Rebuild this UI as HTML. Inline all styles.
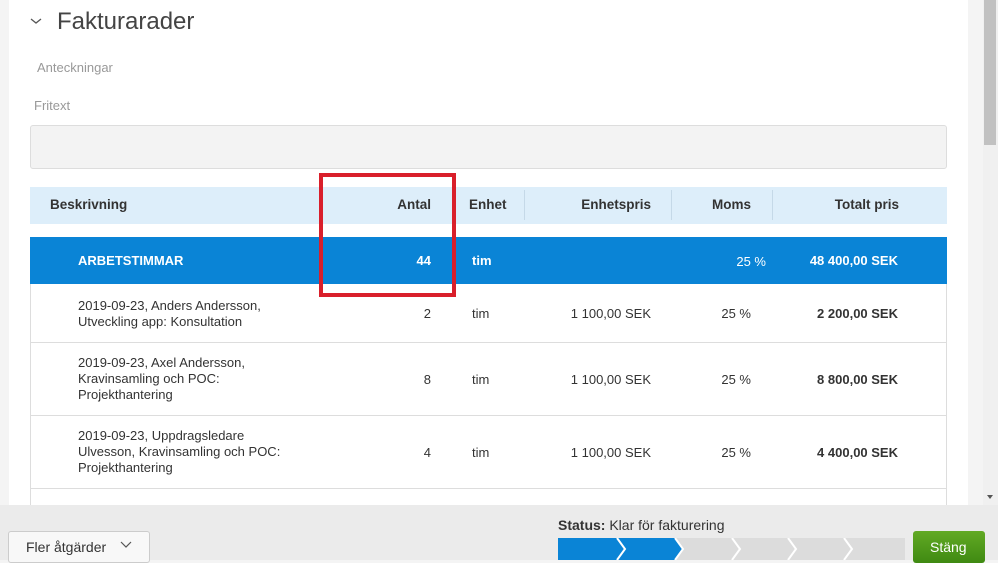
<!DOCTYPE html>
<html><head><meta charset="utf-8"><style>
*{margin:0;padding:0;box-sizing:border-box}
body{width:998px;height:560px;overflow:hidden;background:#f4f4f4;font-family:"Liberation Sans",sans-serif;color:#333;position:relative;font-size:13px}
.a{position:absolute;white-space:nowrap}
.r{text-align:right}
.hd{font-weight:bold;font-size:13.5px;color:#333}
.line{position:absolute;left:30px;width:917px;height:1px;background:#ddd}
.sep{position:absolute;top:190px;width:1px;height:30px;background:#c5d9e8}
</style></head><body>
<div class="a" style="left:9px;top:0;width:959px;height:505px;background:#fff"></div>
<div class="a" style="left:983px;top:0;width:15px;height:505px;background:#f0f0f0"></div>
<div class="a" style="left:984px;top:0;width:12px;height:145px;background:#c1c1c1"></div>
<div class="a" style="left:987px;top:495px;width:0;height:0;border-left:3px solid transparent;border-right:3px solid transparent;border-top:4px solid #555"></div>

<svg class="a" style="left:30px;top:16px" width="12" height="10"><path d="M1 3 L6 7 L11 3" stroke="#555" stroke-width="1.3" fill="none"/></svg>
<div class="a" style="left:57px;top:8px;font-size:24px;color:#444;font-weight:300">Fakturarader</div>
<div class="a" style="left:37px;top:60px;color:#999;font-size:13px">Anteckningar</div>
<div class="a" style="left:34px;top:98px;color:#999;font-size:13px">Fritext</div>
<div class="a" style="left:30px;top:125px;width:917px;height:44px;background:#f3f3f3;border:1px solid #ddd;border-radius:3px"></div>

<div class="a" style="left:30px;top:187px;width:917px;height:37px;background:#ddeefa"></div>
<div class="sep" style="left:524px"></div><div class="sep" style="left:671px"></div><div class="sep" style="left:772px"></div>
<div class="a hd" style="left:50px;top:197px">Beskrivning</div>
<div class="a hd r" style="right:567px;top:197px">Antal</div>
<div class="a hd" style="left:469px;top:197px">Enhet</div>
<div class="a hd r" style="right:347px;top:197px">Enhetspris</div>
<div class="a hd" style="left:712px;top:197px">Moms</div>
<div class="a hd r" style="right:99px;top:197px">Totalt pris</div>

<div class="a" style="left:30px;top:237px;width:917px;height:47px;background:#0a84d6"></div>
<div class="a" style="left:78px;top:253px;color:#fff;font-weight:bold">ARBETSTIMMAR</div>
<div class="a r" style="right:567px;top:253px;color:#fff;font-weight:bold">44</div>
<div class="a" style="left:472px;top:253px;color:#fff;font-weight:bold">tim</div>
<div class="a r" style="right:232px;top:254px;color:#fff">25 %</div>
<div class="a r" style="right:100px;top:253px;color:#fff;font-weight:bold">48 400,00 SEK</div>

<div class="a" style="left:30px;top:284px;width:917px;height:221px;border-left:1px solid #ddd;border-right:1px solid #ddd"></div>
<div class="line" style="top:342px"></div><div class="line" style="top:415px"></div><div class="line" style="top:488px"></div>

<div class="a" style="left:78px;top:298px;line-height:16px">2019-09-23, Anders Andersson,<br>Utveckling app: Konsultation</div>
<div class="a r" style="right:567px;top:306px">2</div><div class="a" style="left:472px;top:306px">tim</div>
<div class="a r" style="right:347px;top:306px">1 100,00 SEK</div><div class="a r" style="right:247px;top:306px">25 %</div>
<div class="a r" style="right:100px;top:306px;font-weight:bold">2 200,00 SEK</div>

<div class="a" style="left:78px;top:355px;line-height:16px">2019-09-23, Axel Andersson,<br>Kravinsamling och POC:<br>Projekthantering</div>
<div class="a r" style="right:567px;top:372px">8</div><div class="a" style="left:472px;top:372px">tim</div>
<div class="a r" style="right:347px;top:372px">1 100,00 SEK</div><div class="a r" style="right:247px;top:372px">25 %</div>
<div class="a r" style="right:100px;top:372px;font-weight:bold">8 800,00 SEK</div>

<div class="a" style="left:78px;top:428px;line-height:16px">2019-09-23, Uppdragsledare<br>Ulvesson, Kravinsamling och POC:<br>Projekthantering</div>
<div class="a r" style="right:567px;top:445px">4</div><div class="a" style="left:472px;top:445px">tim</div>
<div class="a r" style="right:347px;top:445px">1 100,00 SEK</div><div class="a r" style="right:247px;top:445px">25 %</div>
<div class="a r" style="right:100px;top:445px;font-weight:bold">4 400,00 SEK</div>

<div class="a" style="left:319px;top:173px;width:137px;height:124px;border:4px solid #d91f2b"></div>

<div class="a" style="left:0;top:505px;width:998px;height:55px;background:#ebebeb"></div>
<div class="a" style="left:8px;top:531px;width:142px;height:32px;background:#f8f8f8;border:1px solid #ccc;border-radius:3px"></div>
<div class="a" style="left:26px;top:539px;font-size:14px;color:#333">Fler åtgärder</div>
<svg class="a" style="left:120px;top:541px" width="12" height="8"><path d="M1 1 L6 6 L11 1" stroke="#555" stroke-width="1.2" fill="none"/></svg>
<div class="a" style="left:558px;top:517px;font-size:14px;color:#333"><b>Status:</b> Klar för fakturering</div>
<svg class="a" style="left:558px;top:538px" width="347" height="22">
<rect width="347" height="22" fill="#dcdcdc"/>
<path d="M0 0 H117 L125 11 L117 22 H0Z" fill="#0a84d6"/>
<path d="M59 0 L67 11 L59 22" stroke="#fff" stroke-width="2" fill="none"/>
<path d="M117 0 L125 11 L117 22" stroke="#fff" stroke-width="2" fill="none"/>
<path d="M174 0 L182 11 L174 22" stroke="#fff" stroke-width="2" fill="none"/>
<path d="M230 0 L238 11 L230 22" stroke="#fff" stroke-width="2" fill="none"/>
<path d="M286 0 L294 11 L286 22" stroke="#fff" stroke-width="2" fill="none"/>
</svg>
<div class="a" style="left:913px;top:531px;width:72px;height:32px;background:linear-gradient(#62aa24,#3f8a12);border-radius:3px"></div>
<div class="a" style="left:930px;top:539px;font-size:14px;color:#fff">Stäng</div>
</body></html>
